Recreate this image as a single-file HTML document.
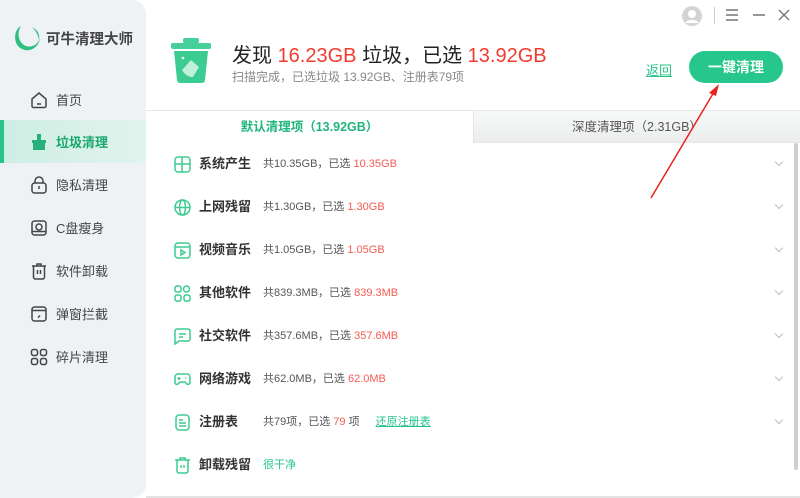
<!DOCTYPE html>
<html><head><meta charset="utf-8"><style>
*{margin:0;padding:0;box-sizing:border-box}
body{width:800px;height:498px;overflow:hidden;background:#fff;font-family:"Liberation Sans","Noto Sans CJK SC",sans-serif;position:relative;color:#333}
.side{position:absolute;left:0;top:0;width:146px;height:498px;background:#eef2f5;border-radius:0 14px 14px 0}
.logo{position:absolute;left:12px;top:23px;display:flex;align-items:center}
.logo span{font-size:14.5px;font-weight:bold;color:#444;margin-left:4px;white-space:nowrap}
.nav{position:absolute;left:0;width:146px;height:43px;display:flex;align-items:center;padding-left:30px;font-size:13px;color:#444}
.nav svg{margin-right:8px}
.nav.act{background:linear-gradient(90deg,#cdeee3,#e2f3ee);color:#1aa86e;font-weight:bold}
.nav.act:before{content:"";position:absolute;left:0;top:0;width:4px;height:43px;background:#27c48a}
.title{position:absolute;left:232px;top:39px;font-size:20px;color:#222;white-space:nowrap}
.title b{font-weight:normal;color:#f23b30}
.sub{position:absolute;left:232px;top:68px;font-size:12px;color:#888}
.back{position:absolute;left:646px;top:60px;font-size:13px;color:#27c48a;text-decoration:underline}
.btn{position:absolute;left:689px;top:51px;width:94px;height:32px;border-radius:16px;background:#26c68c;color:#fff;font-weight:bold;font-size:14px;text-align:center;line-height:32px}
.hline{position:absolute;left:146px;top:110px;width:654px;height:1px;background:#e6e6e6}
.tab1{position:absolute;left:146px;top:111px;width:327px;height:32px;text-align:center;line-height:32px;font-size:12.5px;color:#1fb57c;font-weight:bold}
.tab2{position:absolute;left:473px;top:111px;width:327px;height:32px;text-align:center;line-height:32px;font-size:12.5px;color:#555;background:linear-gradient(#f7f8f8,#eceeee);border-left:1px solid #e3e3e3;border-bottom:1px solid #e6e6e6}
.row{position:absolute;left:174px;height:20px;display:flex;align-items:center;font-size:11px;line-height:20px;color:#555;width:610px}
.row svg{flex:none}
.row span,.row r{line-height:20px;display:inline-block}
.row .n{font-size:13px;font-weight:bold;color:#333;margin-left:8px;width:64px}
.row r{color:#f45b52}
.row .ch{position:absolute;right:2px;top:5px;width:6px;height:6px;border-right:1.2px solid #b8bfc9;border-bottom:1.2px solid #b8bfc9;transform:rotate(45deg)}
.scroll{position:absolute;left:794px;top:143px;width:4px;height:327px;background:#cfcfcf;border-radius:2px}
.g{color:#27c48a}
</style></head><body>
<div class="side">
 <div class="logo"><svg width="30" height="30" viewBox="0 0 30 30"><path d="M9 3 C1 7 1 22 10 26 C18 30 27 24 28 15 C26 22 18 26 12 22 C6 18 5 9 9 3Z" fill="#2fbf80"/><path d="M20 4 C26 7 28 12 27 17 C26 11 23 7 20 4Z" fill="#2fbf80"/></svg><span>可牛清理大师</span></div>
 <div class="nav" style="top:78px"><svg width="18" height="18" viewBox="0 0 18 18" fill="none" stroke="#444" stroke-width="1.5"><path d="M2 8 L9 2 L16 8 V15 a1.5 1.5 0 0 1-1.5 1.5 H3.5 A1.5 1.5 0 0 1 2 15Z"/><path d="M7 13h4"/></svg>首页</div>
 <div class="nav act" style="top:120px"><svg width="18" height="18" viewBox="0 0 18 18" fill="#27b07c"><rect x="7" y="1" width="4" height="6"/><rect x="2" y="7" width="14" height="3"/><rect x="3" y="10" width="12" height="7"/></svg>垃圾清理</div>
 <div class="nav" style="top:163px"><svg width="18" height="18" viewBox="0 0 18 18" fill="none" stroke="#444" stroke-width="1.5"><rect x="2" y="7" width="14" height="10" rx="2.5"/><path d="M5 7V5a4 4 0 0 1 8 0v2M9 10v3"/></svg>隐私清理</div>
 <div class="nav" style="top:206px"><svg width="18" height="18" viewBox="0 0 18 18" fill="none" stroke="#444" stroke-width="1.5"><rect x="2" y="2" width="14" height="14" rx="2.5"/><circle cx="9" cy="8" r="3"/><path d="M2 12.5h14"/></svg>C盘瘦身</div>
 <div class="nav" style="top:249px"><svg width="18" height="18" viewBox="0 0 18 18" fill="none" stroke="#444" stroke-width="1.5"><path d="M2 4h14M7 4V2h4v2M3.5 4v11a2 2 0 0 0 2 2h7a2 2 0 0 0 2-2V4M7.5 8v4M10.5 8v4"/></svg>软件卸载</div>
 <div class="nav" style="top:292px"><svg width="18" height="18" viewBox="0 0 18 18" fill="none" stroke="#444" stroke-width="1.5"><rect x="2" y="2" width="14" height="14" rx="2.5"/><path d="M2 5.5h14M8 12.5l2-2"/></svg>弹窗拦截</div>
 <div class="nav" style="top:335px"><svg width="18" height="18" viewBox="0 0 18 18" fill="none" stroke="#444" stroke-width="1.5"><rect x="1.5" y="1.5" width="6" height="6" rx="2"/><rect x="10.5" y="1.5" width="6" height="6" rx="2"/><rect x="1.5" y="10.5" width="6" height="6" rx="2"/><rect x="10.5" y="10.5" width="6" height="6" rx="2"/></svg>碎片清理</div>
</div>
<svg style="position:absolute;left:168px;top:36px" width="46" height="52" viewBox="0 0 46 52"><rect x="15" y="2" width="16" height="5" rx="2" fill="#46cf98"/><rect x="3" y="7" width="40" height="6" rx="2" fill="#46cf98"/><path d="M6 15h34l-3 29a3 3 0 0 1-3 3H12a3 3 0 0 1-3-3Z" fill="#3ccb91"/><path d="M14 34 L23 24 L31 31 L25 41 Q18 41 14 34Z" fill="#bff0da"/><circle cx="15" cy="22" r="1.3" fill="#fff"/></svg>
<div class="title">发现 <b>16.23GB</b> 垃圾，已选 <b>13.92GB</b></div>
<div class="sub">扫描完成，已选垃圾 13.92GB、注册表79项</div>
<svg style="position:absolute;left:681px;top:5px" width="22" height="22" viewBox="0 0 22 22"><circle cx="11" cy="11" r="10" fill="#d4d4d4"/><circle cx="11" cy="9" r="4" fill="#fff"/><path d="M4 18a8 6 0 0 1 14 0" fill="#fff"/></svg>
<div style="position:absolute;left:714px;top:7px;width:1px;height:17px;background:#ccc"></div>
<svg style="position:absolute;left:725px;top:8px" width="70" height="14" viewBox="0 0 70 14" stroke="#777" stroke-width="1.4" fill="none"><path d="M1 2h12M1 7h12M1 12h12M28 7h12M54 2l10 10M64 2l-10 10"/></svg>
<div class="back">返回</div>
<div class="btn">一键清理</div>
<div class="hline"></div>
<div class="tab1">默认清理项（13.92GB）</div>
<div class="tab2">深度清理项（2.31GB）</div>
<div class="row" style="top:154px"><svg width="17" height="17" viewBox="0 0 17 17" fill="none" stroke="#3ccb91" stroke-width="1.5"><rect x="1" y="1" width="15" height="15" rx="3"/><path d="M1 8h15M8 1v15"/></svg><span class="n">系统产生</span><span>共10.35GB，已选&nbsp;</span><r>10.35GB</r><i class="ch"></i></div>
<div class="row" style="top:197px"><svg width="17" height="17" viewBox="0 0 17 17" fill="none" stroke="#3ccb91" stroke-width="1.5"><circle cx="8.5" cy="8.5" r="7.5"/><ellipse cx="8.5" cy="8.5" rx="3" ry="7.5"/><path d="M1 8.5h15"/></svg><span class="n">上网残留</span><span>共1.30GB，已选&nbsp;</span><r>1.30GB</r><i class="ch"></i></div>
<div class="row" style="top:240px"><svg width="17" height="17" viewBox="0 0 17 17" fill="none" stroke="#3ccb91" stroke-width="1.5"><rect x="1" y="1" width="15" height="15" rx="3"/><path d="M1 5h15M7 8v5l4-2.5Z"/></svg><span class="n">视频音乐</span><span>共1.05GB，已选&nbsp;</span><r>1.05GB</r><i class="ch"></i></div>
<div class="row" style="top:283px"><svg width="17" height="17" viewBox="0 0 17 17" fill="none" stroke="#3ccb91" stroke-width="1.5"><rect x="1" y="1" width="6" height="6" rx="2"/><circle cx="12.5" cy="4" r="3"/><rect x="1" y="10" width="6" height="6" rx="2"/><rect x="10" y="10" width="6" height="6" rx="2"/></svg><span class="n">其他软件</span><span>共839.3MB，已选&nbsp;</span><r>839.3MB</r><i class="ch"></i></div>
<div class="row" style="top:326px"><svg width="17" height="17" viewBox="0 0 17 17" fill="none" stroke="#3ccb91" stroke-width="1.5"><path d="M3 1h11a2 2 0 0 1 2 2v8a2 2 0 0 1-2 2H5l-4 3V3a2 2 0 0 1 2-2Z"/><path d="M5 6h7M5 9h4"/></svg><span class="n">社交软件</span><span>共357.6MB，已选&nbsp;</span><r>357.6MB</r><i class="ch"></i></div>
<div class="row" style="top:369px"><svg width="17" height="17" viewBox="0 0 17 17" fill="none" stroke="#3ccb91" stroke-width="1.5"><path d="M4 3h9a3 3 0 0 1 3 3v6a2 2 0 0 1-3 1l-2-2H6l-2 2a2 2 0 0 1-3-1V6a3 3 0 0 1 3-3Z"/><path d="M5 6v3M3.5 7.5h3M11 7h1"/></svg><span class="n">网络游戏</span><span>共62.0MB，已选&nbsp;</span><r>62.0MB</r><i class="ch"></i></div>
<div class="row" style="top:412px"><svg width="17" height="17" viewBox="0 0 17 17" fill="none" stroke="#3ccb91" stroke-width="1.5"><rect x="2" y="1" width="13" height="15" rx="3"/><path d="M5 6h4M5 9h7M5 12h7"/></svg><span class="n">注册表</span><span>共79项，已选&nbsp;</span><r>79</r><span>&nbsp;项</span><span class="g" style="margin-left:16px;text-decoration:underline">还原注册表</span><i class="ch"></i></div>
<div class="row" style="top:455px"><svg width="17" height="17" viewBox="0 0 17 17" fill="none" stroke="#3ccb91" stroke-width="1.5"><path d="M1 3h15M6 3V1h5v2M3 3v11a2 2 0 0 0 2 2h7a2 2 0 0 0 2-2V3M7 8v3M10 8v3"/></svg><span class="n">卸载残留</span><span class="g">很干净</span></div>
<div class="scroll"></div>
<div style="position:absolute;left:146px;top:496px;width:654px;height:2px;background:#e3e3e3"></div>
<svg style="position:absolute;left:0;top:0" width="800" height="498"><line x1="651" y1="198" x2="714" y2="92" stroke="#e8231f" stroke-width="1.5"/><path d="M719 84 L709 93 L716 96Z" fill="#e8231f"/></svg>
</body></html>
